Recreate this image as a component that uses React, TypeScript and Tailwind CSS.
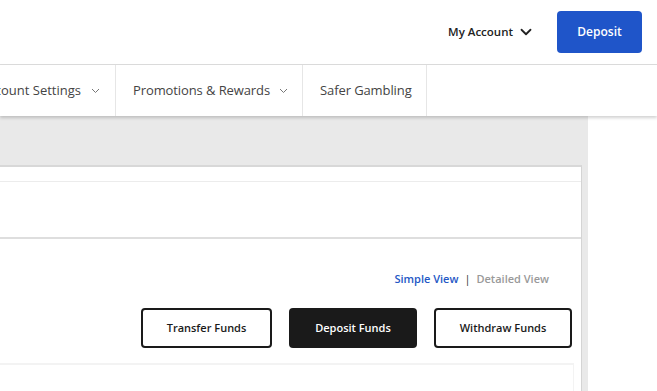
import { ChevronDown } from 'lucide-react';

const NAV = [
  { label: 'Promotions & Rewards', chevron: true },
  { label: 'Safer Gambling', chevron: false },
];

function NavChevron() {
  return (
    <svg width="9" height="6" viewBox="0 0 9 6" className="shrink-0">
      <path d="M1 1l3.5 3.5L8 1" fill="none" stroke="#777" strokeWidth="1" />
    </svg>
  );
}

export default function App() {
  return (
    <div
      className="relative w-[657px] h-[391px] overflow-hidden bg-white text-[#222]"
      style={{ fontFamily: '"Open Sans", "Noto Sans", sans-serif' }}
    >
      {/* Top header */}
      <header className="flex h-[65px] items-center justify-end border-b border-[#dcdcdc] pr-[15px]">
        <div className="flex items-center gap-[4px] text-[11.5px] font-semibold text-[#222]">
          <span>My Account</span>
          <ChevronDown className="h-[18px] w-[18px]" strokeWidth={2.4} />
        </div>
        <button className="ml-[22px] h-[42px] w-[85px] rounded-[4px] bg-[#1f55c9] text-[12px] font-semibold text-white">
          Deposit
        </button>
      </header>

      {/* Nav bar */}
      <nav className="relative z-10 flex h-[51px] bg-white shadow-[0_2px_3px_rgba(0,0,0,0.18)]">
        <div className="flex w-[116px] shrink-0 items-center justify-end gap-[10px] border-r border-[#e6e6e6] pr-[15px]">
          <span className="shrink-0 whitespace-nowrap text-[13px] text-[#444]">Account Settings</span>
          <NavChevron />
        </div>
        {NAV.map((item) => (
          <div
            key={item.label}
            className="flex items-center gap-[9px] border-r border-[#e6e6e6] pl-[17px] pr-[14px]"
          >
            <span className="whitespace-nowrap text-[13px] tracking-[-0.1px] text-[#444]">{item.label}</span>
            {item.chevron && <NavChevron />}
          </div>
        ))}
      </nav>

      {/* Main area */}
      <div className="flex">
        <div className="w-[588px] shrink-0 bg-[#e9e9e9] pt-[49px]">
          <div className="h-[250px] w-[582px] border-r border-t-2 border-[#d4d4d4] border-t-[#d8d8d8] bg-white">
            <div className="h-[15px] border-b border-[#ececec]" />
            <div className="h-[57px] border-b-2 border-[#dedede]" />

            <div className="flex justify-end pr-[32px] pt-[33px] text-[11px] font-semibold leading-[14px]">
              <span className="text-[#2457c5]">Simple View</span>
              <span className="mx-[6px] font-normal text-[#333]">|</span>
              <span className="text-[#999]">Detailed View</span>
            </div>

            <div className="mt-[22px] flex justify-end gap-[17px] pr-[9px]">
              <button className="h-[40px] w-[131px] rounded-[4px] border-2 border-[#1a1a1a] bg-white text-[11px] font-semibold text-[#1a1a1a]">
                Transfer Funds
              </button>
              <button className="h-[40px] w-[128px] rounded-[4px] bg-[#1a1a1a] text-[11px] font-semibold text-white">
                Deposit Funds
              </button>
              <button className="h-[40px] w-[138px] rounded-[4px] border-2 border-[#1a1a1a] bg-white text-[11px] font-semibold text-[#1a1a1a]">
                Withdraw Funds
              </button>
            </div>

            <div className="mt-[15px] h-[40px] w-[574px] border-r border-t-2 border-[#f3f3f3]" />
          </div>
        </div>
        <div className="flex-1 bg-white" />
      </div>
    </div>
  );
}
